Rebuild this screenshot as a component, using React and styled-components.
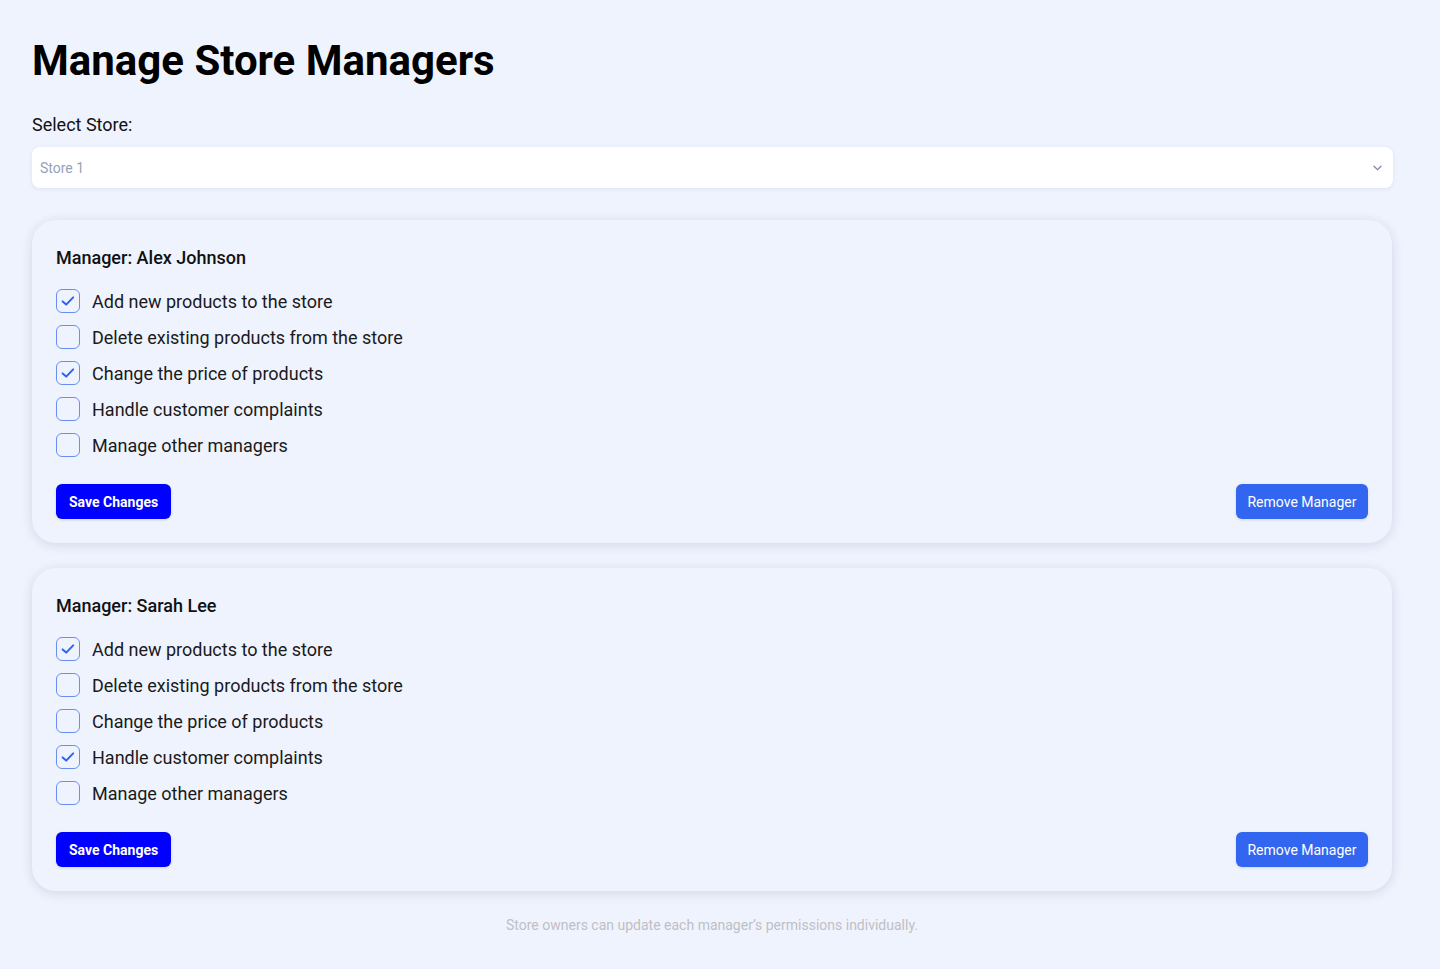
import React, { useState } from "react";
import styled, { createGlobalStyle } from "styled-components";

const Global = createGlobalStyle`
  html, body { margin: 0; padding: 0; background: #eff3fe; }
  body { font-family: Roboto, "Noto Sans", Arial, sans-serif; color: #111; }
  * { box-sizing: border-box; }
`;

const Page = styled.div`
  padding: 33px 48px 24px 32px;
  min-height: 969px;
  background: #eff3fe;
`;

const Title = styled.h1`
  margin: 0;
  font-size: 42px;
  line-height: 56px;
  font-weight: 700;
  color: #000;
`;

const Label = styled.div`
  margin-top: 22px;
  font-size: 18px;
  line-height: 27px;
  color: #111;
`;

const SelectBox = styled.div`
  margin-top: 9px;
  margin-right: -1px;
  height: 41px;
  background: #fff;
  border-radius: 8px;
  box-shadow: 0 1px 4px rgba(30, 41, 80, 0.08);
  display: flex;
  align-items: center;
  justify-content: space-between;
  padding: 0 11px 0 8px;
  font-size: 14px;
  color: #94a3b8;
`;

const Cards = styled.div`
  margin-top: 32px;
  display: flex;
  flex-direction: column;
  gap: 25px;
`;

const Card = styled.div`
  background: #eff3fe;
  border-radius: 24px;
  box-shadow: 0 2px 12px rgba(20, 30, 70, 0.13);
  padding: 24px;
`;

const CardTitle = styled.div`
  font-size: 18px;
  line-height: 27px;
  font-weight: 500;
  color: #111;
`;

const List = styled.div`
  margin-top: 17px;
  display: flex;
  flex-direction: column;
  gap: 9px;
`;

const Row = styled.label`
  display: flex;
  align-items: center;
  gap: 12px;
  height: 27px;
  font-size: 18px;
  color: #1a1a1a;
  cursor: pointer;
`;

const Box = styled.span`
  width: 24px;
  height: 24px;
  margin-top: -1px;
  border: 1.5px solid #6b8ef5;
  border-radius: 6px;
  display: flex;
  align-items: center;
  justify-content: center;
  background: transparent;
  flex: none;
`;

const Actions = styled.div`
  margin-top: 25px;
  display: flex;
  justify-content: space-between;
  align-items: center;
`;

const Button = styled.button`
  height: 35px;
  border: none;
  border-radius: 6px;
  font-family: Roboto, Arial, sans-serif;
  font-size: 14px;
  color: #fff;
  cursor: pointer;
  background: ${(p) => (p.$primary ? "#0000ff" : "#3366f0")};
  font-weight: ${(p) => (p.$primary ? 700 : 400)};
  box-shadow: 0 1px 3px rgba(0, 0, 0, 0.12);
  padding: ${(p) => (p.$primary ? "0 13px" : "0 11.5px")};
`;

const Footer = styled.div`
  margin-top: 24px;
  text-align: center;
  font-size: 14px;
  line-height: 20px;
  color: #bfbfc4;
`;

const PERMS = [
  "Add new products to the store",
  "Delete existing products from the store",
  "Change the price of products",
  "Handle customer complaints",
  "Manage other managers",
];

const Check = () => (
  <svg width="16" height="16" viewBox="0 0 16 16" fill="none">
    <path d="M2.6 8.4 L6.2 11.6 L13.2 4.4" stroke="#2f62f3" strokeWidth="2" strokeLinecap="round" strokeLinejoin="round" />
  </svg>
);

function ManagerCard({ name, initial }) {
  const [checked, setChecked] = useState(initial);
  return (
    <Card>
      <CardTitle>Manager: {name}</CardTitle>
      <List>
        {PERMS.map((p, i) => (
          <Row key={p} onClick={() => setChecked((c) => c.map((v, j) => (j === i ? !v : v)))}>
            <Box>{checked[i] && <Check />}</Box>
            {p}
          </Row>
        ))}
      </List>
      <Actions>
        <Button $primary>Save Changes</Button>
        <Button>Remove Manager</Button>
      </Actions>
    </Card>
  );
}

export default function App() {
  return (
    <>
      <Global />
      <Page>
        <Title>Manage Store Managers</Title>
        <Label>Select Store:</Label>
        <SelectBox>
          <span>Store 1</span>
          <svg width="9" height="6" viewBox="0 0 9 6" fill="none">
            <path d="M1 1.2 L4.5 4.6 L8 1.2" stroke="#7c8aa5" strokeWidth="1.3" strokeLinecap="round" />
          </svg>
        </SelectBox>
        <Cards>
          <ManagerCard name="Alex Johnson" initial={[true, false, true, false, false]} />
          <ManagerCard name="Sarah Lee" initial={[true, false, false, true, false]} />
        </Cards>
        <Footer>Store owners can update each manager’s permissions individually.</Footer>
      </Page>
    </>
  );
}
